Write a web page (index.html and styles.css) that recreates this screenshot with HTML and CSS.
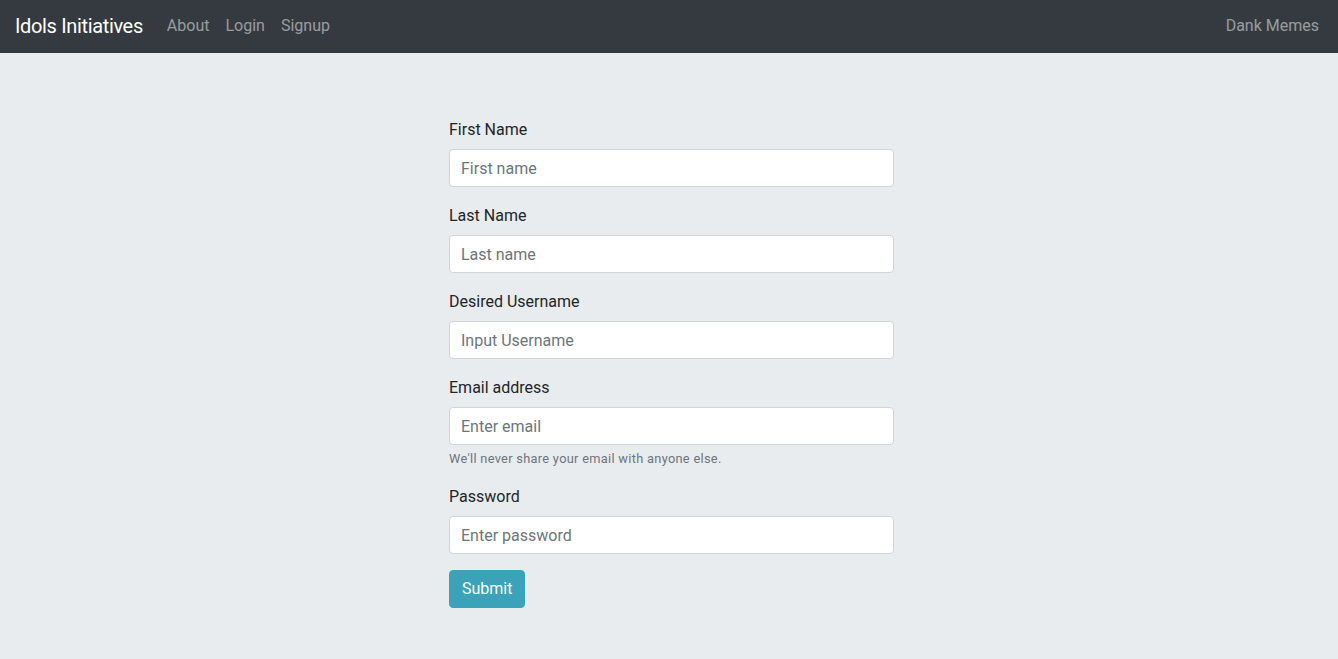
FILE: index.html
```html
<!DOCTYPE html>
<html lang="en">
<head>
<meta charset="utf-8">
<title>Signup</title>
<link rel="stylesheet" href="styles.css">
</head>
<body>
<nav class="navbar">
  <a class="brand" href="#">Idols Initiatives</a>
  <ul class="nav-links">
    <li><a href="#">About</a></li>
    <li><a href="#">Login</a></li>
    <li><a href="#">Signup</a></li>
  </ul>
  <a class="nav-right" href="#">Dank Memes</a>
</nav>
<main class="jumbotron">
  <form class="signup">
    <div class="form-group">
      <label for="first">First Name</label>
      <input id="first" class="form-control" type="text" placeholder="First name">
    </div>
    <div class="form-group">
      <label for="last">Last Name</label>
      <input id="last" class="form-control" type="text" placeholder="Last name">
    </div>
    <div class="form-group">
      <label for="user">Desired Username</label>
      <input id="user" class="form-control" type="text" placeholder="Input Username">
    </div>
    <div class="form-group">
      <label for="email">Email address</label>
      <input id="email" class="form-control" type="email" placeholder="Enter email">
      <small class="form-text">We'll never share your email with anyone else.</small>
    </div>
    <div class="form-group">
      <label for="pw">Password</label>
      <input id="pw" class="form-control" type="password" placeholder="Enter password">
    </div>
    <button type="submit" class="btn">Submit</button>
  </form>
</main>
</body>
</html>
```
FILE: styles.css
```css
* { box-sizing: border-box; }
html, body { height: 100%; }
body {
  margin: 0;
  font-family: Roboto, "Noto Sans", "Liberation Sans", sans-serif;
  font-size: 16px;
  line-height: 1.5;
  color: #212529;
  background: #e9ecef;
  display: flex;
  flex-direction: column;
}
a { text-decoration: none; }
.navbar {
  display: flex;
  align-items: center;
  height: 53px;
  padding: 7px 16px 9px 15px;
  background: #343a40;
  flex-shrink: 0;
}
.brand {
  color: #fff;
  font-size: 20px;
  line-height: 30px;
  letter-spacing: -0.35px;
  margin-right: 16px;
}
.nav-links {
  display: flex;
  list-style: none;
  margin: 0;
  padding: 0;
  flex: 1;
}
.nav-links a, .nav-right {
  display: block;
  color: rgba(255,255,255,.5);
  padding: 8px;
}
.nav-right { padding-right: 3px; }
.jumbotron {
  flex: 1;
  padding: 64px 0 32px 449px;
}
.signup { width: 445px; }
.form-group { margin-bottom: 16px; }
label { display: inline-block; padding-top: 1px; margin-bottom: 7px; }
.form-control {
  display: block;
  width: 100%;
  height: 38px;
  padding: 6px 12px 6px 11px;
  font: inherit;
  line-height: 1.5;
  color: #495057;
  background: #fff;
  border: 1px solid #ced4da;
  border-radius: 4px;
}
.form-control::placeholder { color: #6c757d; opacity: 1; }
.form-text {
  display: block;
  margin-top: 4px;
  font-size: 12.8px;
  letter-spacing: 0.3px;
  color: #6c757d;
}
.btn {
  display: inline-block;
  height: 38px;
  padding: 6px 12px;
  font: inherit;
  line-height: 1.5;
  color: #fff;
  background: #3aa3b9;
  border: 1px solid #3aa3b9;
  border-radius: 4px;
  cursor: pointer;
}
```
